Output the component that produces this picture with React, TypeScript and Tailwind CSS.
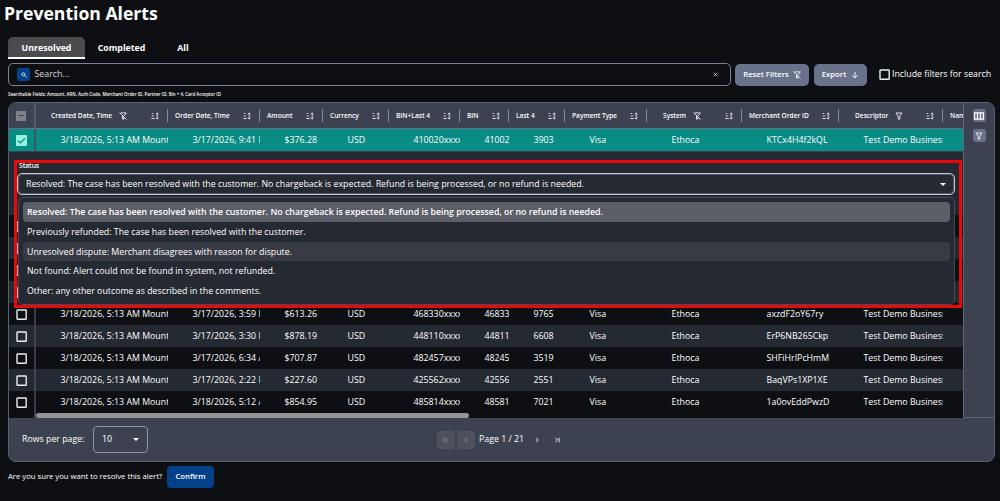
import type { ReactNode } from "react"

type IconProps = { className?: string }

const COLS = "grid grid-cols-[132px_92px_63px_66px_71px_49px_56px_82px_95px_97px_104px_20px]"

type Column = {
    label: string
    pad?: string
    filter?: "on" | "off"
}

const columns: Column[] = [
    { label: "Created Date, Time", pad: "pl-[15px]", filter: "off" },
    { label: "Order Date, Time" },
    { label: "Amount" },
    { label: "Currency" },
    { label: "BIN+Last 4" },
    { label: "BIN" },
    { label: "Last 4" },
    { label: "Payment Type" },
    { label: "System", pad: "pl-4", filter: "off" },
    { label: "Merchant Order ID" },
    { label: "Descriptor", pad: "pl-4", filter: "on" },
]

const selectedRow = ["3/17/2026, 9:41 PM", "$376.28", "410020xxxx", "410020", "3903", "KTCx4H4f2kQL"]

const rows = [
    ["3/17/2026, 3:59 PM", "$613.26", "468330xxxx", "468330", "9765", "axzdF2oY67ry"],
    ["3/17/2026, 3:30 PM", "$878.19", "448110xxxx", "448110", "6608", "ErP6NB265Ckp"],
    ["3/17/2026, 6:34 AM", "$707.87", "482457xxxx", "482457", "3519", "SHFiHrIPcHmM"],
    ["3/17/2026, 2:22 PM", "$227.60", "425562xxxx", "425562", "2551", "BaqVPs1XP1XE"],
    ["3/18/2026, 5:12 AM", "$854.95", "485814xxxx", "485814", "7021", "1a0ovEddPwzD"],
]

const statuses = [
    { text: "Resolved: The case has been resolved with the customer. No chargeback is expected. Refund is being processed, or no refund is needed.", style: "bg-[#5b5e67] font-semibold" },
    { text: "Previously refunded: The case has been resolved with the customer.", style: "" },
    { text: "Unresolved dispute: Merchant disagrees with reason for dispute.", style: "bg-[#383b44]" },
    { text: "Not found: Alert could not be found in system, not refunded.", style: "" },
    { text: "Other: any other outcome as described in the comments.", style: "" },
]

function SortIcon() {
    return (
        <svg viewBox="0 0 8 8" className="w-2 h-2 shrink-0" fill="none" stroke="#e6e8ee" strokeWidth="0.9">
            <path d="M0.8 1.5h1.4M0.8 4h2.2M0.3 6.5h3.5M6.2 1v6" />
            <path d="M4.9 2.2 6.2 0.9l1.3 1.3M4.9 5.8l1.3 1.3 1.3-1.3" />
        </svg>
    )
}

function FilterIcon({ className }: IconProps) {
    return (
        <svg viewBox="0 0 8 8" className={className} fill="none" stroke="#f1f2f6" strokeWidth="0.9">
            <path d="M1 1h6L4.8 4.1v3H3.2v-3z" />
        </svg>
    )
}

function FilterOffIcon({ className }: IconProps) {
    return (
        <svg viewBox="0 0 8 8" className={className} fill="none" stroke="#f1f2f6" strokeWidth="0.9">
            <path d="M1.7 0.9h5.6L5 4M3.5 3.8v3.3h1.4V5M0.5 0.5l7 7" />
        </svg>
    )
}

function Caret() {
    return (
        <svg viewBox="0 0 6 3" className="w-[6px] h-[3px] shrink-0" fill="#fff">
            <path d="M0 0h6L3 3z" />
        </svg>
    )
}

function EmptyBox() {
    return (
        <svg viewBox="0 0 11 11" className="w-[11px] h-[11px] shrink-0" fill="none" stroke="#ececf4" strokeWidth="1.4">
            <rect x="1" y="1" width="9.2" height="9.2" rx="0.5" />
        </svg>
    )
}

function CheckCell({ checked }: { checked?: boolean }) {
    return (
        <div className="w-[27px] shrink-0 flex items-center pl-[7px] border-r-2 border-[#454a58]/80">
            {checked ? (
                <span className="w-[11px] h-[11px] rounded-[1px] bg-[#8ff5e0] flex items-center justify-center">
                    <svg viewBox="0 0 10 10" className="w-[9px] h-[9px]" fill="none" stroke="#0b7d75" strokeWidth="1.3">
                        <path d="M1.2 5.2 3.8 7.7 8.8 2.6" />
                    </svg>
                </span>
            ) : (
                <EmptyBox />
            )}
        </div>
    )
}

function Row({ data, className, checked }: { data: string[]; className: string; checked?: boolean }) {
    const [date, amount, binLast, bin, last, order] = data
    const cells = ["3/18/2026, 5:13 AM Mountain", date, amount, "USD", binLast, bin, last, "Visa", "Ethoca", order, "Test Demo Business"]
    return (
        <div className={`flex h-[22px] shrink-0 ${className}`}>
            <CheckCell checked={checked} />
            <div className={COLS}>
                {cells.map((cell, i) => (
                    <div key={i} className="pl-[24.5px] leading-[22px] overflow-hidden whitespace-nowrap">{cell}</div>
                ))}
            </div>
        </div>
    )
}

function PageButton({ disabled, children }: { disabled?: boolean; children: ReactNode }) {
    return (
        <button className={`w-[18px] h-[18px] rounded-[2px] flex items-center justify-center ${disabled ? "bg-[#4d525e] text-[#8b909c]" : "text-white"}`}>
            <svg viewBox="0 0 6 6" className="w-[6px] h-[6px]" fill="none" stroke="currentColor" strokeWidth="0.9">
                {children}
            </svg>
        </button>
    )
}

export default function App() {
    return (
        <div className="w-[1000px] h-[501px] overflow-hidden bg-[#0e0f13] text-white font-['Open_Sans','Noto_Sans',sans-serif] text-[8.8px]">
            <h1 className="pl-1 h-[37px] text-[17.6px] leading-[27px] font-bold">Prevention Alerts</h1>

            <div className="flex pl-2 h-[23px] font-bold">
                <button className="w-[77px] h-[22px] pt-1 rounded-t-[5px] bg-[#4a4b4e] border-b-2 border-white">Unresolved</button>
                <button className="w-[73px] h-[22px] pt-[2px]">Completed</button>
                <button className="w-[50px] h-[22px] pt-[2px]">All</button>
            </div>

            <div className="flex items-center pl-2 pt-[3px] h-[26px]">
                <div className="w-[723px] h-[23px] shrink-0 flex items-center rounded-[5px] border border-[#7c8396] pl-2 pr-3">
                    <span className="w-[13px] h-[13px] rounded-[2px] bg-[#03428a] flex items-center justify-center">
                        <svg viewBox="0 0 6 6" className="w-[6px] h-[6px]" fill="none" stroke="#fff" strokeWidth="0.8">
                            <circle cx="2.3" cy="2.3" r="1.5" />
                            <path d="M3.4 3.4 5.5 5.5" />
                        </svg>
                    </span>
                    <span className="ml-[4.5px] pt-px flex-1 text-[#d5d6db]">Search...</span>
                    <svg viewBox="0 0 5 5" className="w-[5px] h-[5px]" stroke="#d9dae0" strokeWidth="0.8">
                        <path d="m.7.7 3.6 3.6M4.3.7.7 4.3" />
                    </svg>
                </div>
                <button className="ml-1 w-[74px] h-[22px] shrink-0 rounded-[5px] bg-[#69728a] text-[7.7px] font-semibold flex items-center justify-center gap-1">
                    Reset Filters <FilterOffIcon className="w-2 h-2" />
                </button>
                <button className="ml-[5px] w-[53px] h-[22px] shrink-0 rounded-[5px] bg-[#69728a] text-[7.7px] font-semibold flex items-center justify-center gap-[5px]">
                    Export
                    <svg viewBox="0 0 8 8" className="w-2 h-2" fill="none" stroke="#fff" strokeWidth="0.9">
                        <path d="M4 1v6M1.2 4.2 4 7l2.8-2.8" />
                    </svg>
                </button>
                <label className="ml-[12px] flex items-center gap-[2px] whitespace-nowrap">
                    <EmptyBox />
                    <span className="pt-px">Include filters for search</span>
                </label>
            </div>

            <p className="pl-2 h-4 pt-[5px] text-[4.4px] leading-[7px] font-semibold">Searchable Fields: Amount, ARN, Auth Code, Merchant Order ID, Partner ID, Bin + 4, Card Acceptor ID</p>

            {/* Alerts grid */}
            <div className="ml-2 w-[987px] h-[360px] flex flex-col rounded-[8px] border border-[#566176] bg-[#3d4251] overflow-hidden">
                <div className="flex h-[315px] shrink-0">
                    <div className="relative w-[954px] h-[315px] flex flex-col bg-[#0e0f13] overflow-hidden">
                        <div className="flex h-[26px] shrink-0 bg-[#3d4251] border-b border-[#667087] text-[6.6px] font-semibold">
                            <div className="w-[27px] shrink-0 flex items-center pl-[7px] border-r-2 border-[#535a6b]">
                                <span className="w-[10px] h-[10px] rounded-[1px] bg-[#808186] flex items-center justify-center">
                                    <span className="w-[6px] h-px bg-[#3d4251]" />
                                </span>
                            </div>
                            <div className={COLS}>
                                {columns.map((col) => (
                                    <div key={col.label} className={`flex items-center overflow-hidden whitespace-nowrap pr-[9px] ${col.pad ?? "pl-[7px]"} relative`}>
                                        <span>{col.label}</span>
                                        {col.filter === "off" && <FilterOffIcon className="ml-[7px] w-2 h-2" />}
                                        {col.filter === "on" && <FilterIcon className="ml-[7px] w-2 h-2" />}
                                        <span className="ml-auto"><SortIcon /></span>
                                        <span className="absolute right-0 top-[6px] w-px h-[13px] bg-[#7f899f]" />
                                    </div>
                                ))}
                                <div className="flex items-center pl-[7px] overflow-hidden whitespace-nowrap">Name</div>
                            </div>
                        </div>

                        <Row data={selectedRow} className="bg-[#098c84]" checked />

                        <div className="h-[64px] shrink-0 bg-[#252932] border-t border-[#3a3f4b]" />
                        <div className="flex h-[22px] shrink-0 bg-[#0e0f13]"><CheckCell /></div>
                        <div className="flex h-[22px] shrink-0 bg-[#252932]"><CheckCell /></div>
                        <div className="flex h-[22px] shrink-0 bg-[#0e0f13]"><CheckCell /></div>
                        <div className="flex h-[22px] shrink-0 bg-[#252932]"><CheckCell /></div>

                        {rows.map((row, i) => (
                            <Row key={row[5]} data={row} className={i % 2 ? "bg-[#252932]" : "bg-[#0e0f13]"} />
                        ))}

                        <div className="flex h-[5px] shrink-0">
                            <div className="w-[27px] border-r-2 border-[#454a58]" />
                            <div className="w-[433px] h-[5px] rounded-[3px] bg-[#949496]" />
                        </div>

                        {/* Status select with its open menu, outlined in red */}
                        <div className="absolute left-[5px] top-[57px] w-[948px] h-[148px] border-3 border-[#ea0808] overflow-hidden">
                            <div className="h-[10px] pl-[2px] text-[6.6px] leading-[5px] font-semibold bg-[#252932]">Status</div>
                            <div className="w-[938px] h-[22px] rounded-[5px] border border-[#c3c8da] bg-[#252932] pl-2 pr-2 flex items-center justify-between outline outline-[#c3c8da]/30 -outline-offset-2">
                                <span className="pt-[2px]">{statuses[0].text}</span>
                                <Caret />
                            </div>
                            <div className="mt-[2px] ml-px w-[937px] h-[108px] rounded-[5px] border border-[#454b5b] bg-[#252932] p-1">
                                {statuses.map((s) => (
                                    <div key={s.text} className={`h-[19.8px] rounded-[4px] pl-1 leading-[21.8px] whitespace-nowrap ${s.style}`}>{s.text}</div>
                                ))}
                            </div>
                        </div>
                    </div>

                    <div className="flex-1 border-l border-b border-[#5f6779] flex flex-col items-center pt-[6px] gap-[7px]">
                        <span className="w-[13px] h-[13px] rounded-[3px] bg-[#69728a] flex items-center justify-center">
                            <svg viewBox="0 0 10 8" className="w-[10px] h-2" fill="none" stroke="#fff" strokeWidth="1.2">
                                <path d="M0.6 0.9h8.8v6.2H0.6zM3.5 1v6M6.5 1v6" />
                            </svg>
                        </span>
                        <span className="w-[13px] h-[13px] rounded-[3px] bg-[#69728a] flex items-center justify-center">
                            <FilterIcon className="w-2 h-2" />
                        </span>
                    </div>
                </div>

                <div className="flex flex-1 items-center pl-[13px]">
                    <span className="w-[71px]">Rows per page:</span>
                    <div className="w-[55px] h-[27px] rounded-[4px] border border-[#8c93a3] flex items-center justify-between pl-2 pr-2">
                        <span>10</span>
                        <Caret />
                    </div>
                    <div className="ml-[289px] flex items-center">
                        <PageButton disabled><path d="M1 .6v4.8M4.8.8 2.6 3l2.2 2.2" /></PageButton>
                        <span className="w-[2px]" />
                        <PageButton disabled><path d="M4.2.8 2 3l2.2 2.2" /></PageButton>
                        <span className="w-[53px] pl-1 font-medium whitespace-nowrap">Page 1 / 21</span>
                        <PageButton><path d="M2 .8 4.2 3 2 5.2" /></PageButton>
                        <span className="w-[2px]" />
                        <PageButton><path d="M5 .6v4.8M1.2.8 3.4 3 1.2 5.2" /></PageButton>
                    </div>
                </div>
            </div>

            <div className="flex items-center pl-2 pt-1">
                <span className="w-[159px] text-[7.7px] whitespace-nowrap">Are you sure you want to resolve this alert?</span>
                <button className="w-[47px] h-[22px] rounded-[4px] bg-[#03428a] text-[7.7px] font-semibold">Confirm</button>
            </div>
        </div>
    )
}
